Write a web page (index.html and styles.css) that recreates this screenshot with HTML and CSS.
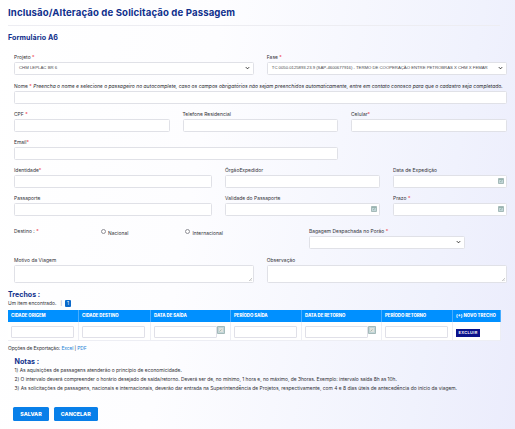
FILE: index.html
```html
<!DOCTYPE html>
<html lang="pt-BR">
<head>
<meta charset="utf-8">
<title>Solicitação de Passagem</title>
<link rel="stylesheet" href="styles.css">
</head>
<body>
<h1><span>Inclusão/Alteração de Solicitação de Passagem</span></h1>
<h2 class="form-title">Formulário A6</h2>
<form class="form">
  <div class="row two first">
    <div class="field"><label>Projeto <i class="req">*</i></label><div class="control select">CHM LEPLAC BR 6<svg class="chevron" viewBox="0 0 6 4"><path d="M1 1l2 2 2-2"/></svg></div></div>
    <div class="field"><label>Fase <i class="req">*</i></label><div class="control select"><span class="phase">TC 0050.0125893.23.9 (SAP-4600677916) - TERMO DE COOPERAÇÃO ENTRE PETROBRAS X CHM X FEMAR</span><svg class="chevron" viewBox="0 0 6 4"><path d="M1 1l2 2 2-2"/></svg></div></div>
  </div>
  <div class="row">
    <div class="field"><label>Nome <i class="req">*</i> <em class="hint">Preencha o nome e selecione o passageiro no autocomplete, caso os campos obrigatórios não sejam preenchidos automaticamente, entre em contato conosco para que o cadastro seja completado.</em></label><div class="control"></div></div>
  </div>
  <div class="row three">
    <div class="field"><label>CPF <i class="req">*</i></label><div class="control"></div></div>
    <div class="field"><label>Telefone Residencial</label><div class="control"></div></div>
    <div class="field"><label>Celular<i class="req">*</i></label><div class="control"></div></div>
  </div>
  <div class="row three">
    <div class="field wide"><label>Email<i class="req">*</i></label><div class="control"></div></div>
  </div>
  <div class="row ident">
    <div class="field"><label>Identidade<i class="req">*</i></label><div class="control"></div></div>
    <div class="field"><label>ÓrgãoExpedidor</label><div class="control"></div></div>
    <div class="field"><label>Data de Expedição</label><div class="control date"><svg class="cal" viewBox="0 0 6 6"><path class="page" d="M.5.5h5v5h-5z"/><path class="mark" d="M1 1.5h4M2 4l2-1.5"/></svg></div></div>
  </div>
  <div class="row ident">
    <div class="field"><label>Passaporte</label><div class="control"></div></div>
    <div class="field"><label>Validade do Passaporte</label><div class="control date"><svg class="cal" viewBox="0 0 6 6"><path class="page" d="M.5.5h5v5h-5z"/><path class="mark" d="M1 1.5h4M2 4l2-1.5"/></svg></div></div>
    <div class="field"><label>Prazo <i class="req">*</i></label><div class="control date"><svg class="cal" viewBox="0 0 6 6"><path class="page" d="M.5.5h5v5h-5z"/><path class="mark" d="M1 1.5h4M2 4l2-1.5"/></svg></div></div>
  </div>
  <div class="row dest">
    <label>Destino : <i class="req">*</i></label>
    <div class="option"><span class="radio"></span>Nacional</div>
    <div class="option"><span class="radio"></span>Internacional</div>
    <div class="field"><label>Bagagem Despachada no Porão <i class="req">*</i></label><div class="control select"><svg class="chevron" viewBox="0 0 6 4"><path d="M1 1l2 2 2-2"/></svg></div></div>
  </div>
  <div class="row two">
    <div class="field"><label>Motivo da Viagem</label><div class="control area"><svg class="grip" viewBox="0 0 4 4"><path d="M0 4l4-4M2 4l2-2"/></svg></div></div>
    <div class="field"><label>Observação</label><div class="control area"><svg class="grip" viewBox="0 0 4 4"><path d="M0 4l4-4M2 4l2-2"/></svg></div></div>
  </div>
</form>
<section class="legs">
  <h2>Trechos :</h2>
  <div class="pager"><span class="found">Um item encontrado.</span><span class="bar">|</span><span class="page-no">1</span></div>
  <div class="table">
    <div class="tr head">
      <span>CIDADE ORIGEM</span><span>CIDADE DESTINO</span><span>DATA DE SAÍDA</span><span>PERÍODO SAÍDA</span><span>DATA DE RETORNO</span><span>PERÍODO RETORNO</span><span class="new">(+) NOVO TRECHO</span>
    </div>
    <div class="tr body">
      <span><b class="cell"></b></span>
      <span><b class="cell"></b></span>
      <span><b class="cell"></b><svg class="cell-cal" viewBox="0 0 8 8"><path class="page" d="M.5.5h7v7h-7z"/><path class="sheet" d="M2 2h4v4H2z"/><path class="mark" d="M2.5 5.5l2-2"/></svg></span>
      <span><b class="cell"></b></span>
      <span><b class="cell"></b><svg class="cell-cal" viewBox="0 0 8 8"><path class="page" d="M.5.5h7v7h-7z"/><path class="sheet" d="M2 2h4v4H2z"/><path class="mark" d="M2.5 5.5l2-2"/></svg></span>
      <span><b class="cell"></b></span>
      <span><button class="delete">EXCLUIR</button></span>
    </div>
  </div>
  <p class="export">Opções de Exportação: <a>Excel</a> | <a>PDF</a></p>
</section>
<section class="notes">
  <h2>Notas :</h2>
  <p>1) As aquisições de passagens atenderão o princípio de economicidade.</p>
  <p class="n2">2) O intervalo deverá compreender o horário desejado de saída/retorno. Deverá ser de, no mínimo, 1 hora e, no máximo, de 3horas. Exemplo: intervalo saída 8h as 10h.</p>
  <p>3) As solicitações de passagens, nacionais e internacionais, deverão dar entrada na Superintendência de Projetos, respectivamente, com 4 e 8 dias úteis de antecedência do início da viagem.</p>
</section>
<div class="actions"><button>SALVAR</button><button>CANCELAR</button></div>
</body>
</html>
```
FILE: styles.css
```css
* { box-sizing: border-box; }
html { height: 100%; }
body {
  margin: 0;
  width: 515px;
  height: 429px;
  overflow: hidden;
  padding: 5px 8px 0;
  font: 4.9px/10px Inter, "Open Sans", sans-serif;
  color: #303036;
  background: linear-gradient(100deg, #fff 0%, #fdfdff 38%, #f0f2fd 82%, #ebecfc 100%);
}
h1, h2, p { margin: 0; }
h1 {
  height: 21px;
  margin-right: 7px;
  border-bottom: 1px solid #ededf2;
  color: #10308c;
  font-size: 9.6px;
  font-weight: 700;
  line-height: 15px;
  letter-spacing: .12px;
  white-space: nowrap;
}
h2 { color: #10308c; font-size: 7px; line-height: 10px; font-weight: 700; }
.form-title { margin-top: 6px; height: 20px; padding-top: 1px; font-size: 7.1px; letter-spacing: .08px; }
.form { padding: 0 0 0 6px; }
.row { display: grid; height: 28px; }
.first { height: 29px; }
.two { grid-template-columns: 240px 240px; column-gap: 12.8px; }
.three { grid-template-columns: repeat(3, 155.5px); column-gap: 13px; }
.wide { grid-column: span 2; }
.ident { grid-template-columns: 198px 155px 114px; column-gap: 13px; }
.dest { grid-template-columns: 86.5px 84.5px 124px 155.5px; margin-top: 5px; height: 29px; }
.row > .field:only-child:not(.wide) { width: 492.5px; }
label { display: block; height: 10px; letter-spacing: .04px; white-space: nowrap; }
.req { color: #f0414d; font-style: normal; }
.hint { color: #25252b; letter-spacing: .043px; }
.control {
  position: relative;
  display: flex;
  align-items: center;
  height: 12.5px;
  border: 1px solid #e0e1e7;
  border-radius: 1.5px;
  background: #fff;
}
.select {
  padding: 0 3px 0 4px;
  color: #4a4a50;
  font-family: "Liberation Sans", sans-serif;
  font-size: 4.3px;
  white-space: nowrap;
}
.phase { letter-spacing: -.037px; }
.chevron { width: 5px; height: 4px; margin-left: auto; }
.chevron path { fill: none; stroke: #222; stroke-width: 1.1; }
.date { justify-content: flex-end; padding-right: 2px; }
.cal { width: 6px; height: 6px; }
.page { fill: #c2d6d8; stroke: #a5bab9; }
.mark { fill: none; stroke: #7d9d93; stroke-width: .6; }
.area { height: 17.5px; align-items: flex-end; justify-content: flex-end; padding: 1px; }
.grip { width: 3px; height: 3px; }
.grip path { stroke: #888; stroke-width: .6; }
.option { display: flex; align-items: center; height: 13px; gap: 2.5px; letter-spacing: .04px; }
.radio {
  width: 5px;
  height: 5px;
  margin-top: -1.5px;
  border: 1px solid #8f8f96;
  border-radius: 50%;
  background: #fff;
}
.legs { height: 68px; margin-top: 6px; }
.legs h2 { height: 9px; padding-top: .5px; letter-spacing: .05px; }
.pager { display: flex; align-items: center; height: 11.5px; padding-bottom: 1.5px; }
.bar { margin: 0 3px 0 4px; color: #888; }
.page-no {
  width: 6px;
  height: 7px;
  border-radius: 1px;
  background: #0b69ca;
  color: #fff;
  line-height: 7px;
  text-align: center;
}
.table { width: 493px; }
.tr { display: grid; grid-template-columns: 71px 72px 80px 71px 80px 71px 48px; }
.tr > span { display: flex; align-items: center; padding-left: 2.5px; border-right: 1px solid #edeef4; }
.head { height: 12px; background: #0090ff; color: #fff; font-size: 4.3px; font-weight: 800; white-space: nowrap; }
.head > span { padding-left: 3px; border-color: #48adff; }
.head > .new { letter-spacing: .06px; }
.body { height: 19.5px; background: #fff; border-bottom: 1px solid #edeef4; }
.cell { width: 63px; height: 12px; margin-top: 2.5px; border: 1px solid #e0e0e8; border-radius: 1px; background: #fff; }
.cell-cal { width: 8px; height: 8px; margin-top: -1px; }
.sheet { fill: #e0e3dd; }
.delete {
  width: 24px;
  height: 8px;
  margin: 4px 0 0 .5px;
  padding: 0;
  border: 0;
  background: #0b118b;
  color: #fff;
  font: 600 4px/8px Inter, sans-serif;
  letter-spacing: .3px;
}
.export { padding-top: 1.5px; letter-spacing: -.1px; }
a { color: #1c83d5; }
.notes { padding-left: 6.5px; }
.notes h2 { height: 8.5px; font-size: 7.1px; }
.notes p { height: 9.2px; line-height: 9.2px; white-space: nowrap; letter-spacing: .007px; }
.notes .n2 { letter-spacing: -.018px; }
.actions { display: flex; gap: 5px; padding: 13.5px 0 0 5px; }
.actions button {
  width: 36px;
  height: 14px;
  padding: 0;
  border: 0;
  border-radius: 1.5px;
  background: #087fe9;
  color: #fff;
  font: 800 5.3px/14px Inter, sans-serif;
  letter-spacing: .06px;
}
.actions button + button { width: 43.5px; }
```
